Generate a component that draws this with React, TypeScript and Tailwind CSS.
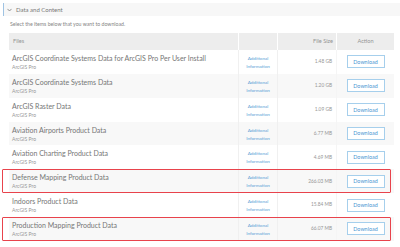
import React from "react";

const rows = [
  { name: "ArcGIS Coordinate Systems Data for ArcGIS Pro Per User Install", size: "1.48 GB", hl: false },
  { name: "ArcGIS Coordinate Systems Data", size: "1.20 GB", hl: false },
  { name: "ArcGIS Raster Data", size: "1.09 GB", hl: false },
  { name: "Aviation Airports Product Data", size: "6.77 MB", hl: false },
  { name: "Aviation Charting Product Data", size: "4.69 MB", hl: false },
  { name: "Defense Mapping Product Data", size: "266.03 MB", hl: true },
  { name: "Indoors Product Data", size: "15.84 MB", hl: false },
  { name: "Production Mapping Product Data", size: "66.07 MB", hl: true },
];

export default function App() {
  return (
    <div
      className="w-[400px] h-[247px] bg-white overflow-hidden relative"
      style={{ fontFamily: "Lato, 'Noto Sans', sans-serif" }}
    >
      <div className="pt-[3px] pl-[3px]">
        <div className="h-[13px] bg-[#f7f7f7] border-l-[1.5px] border-[#9fc3e3] flex items-center pl-[3px]">
          <svg width="5" height="4" viewBox="0 0 5 4" className="mr-[4px]">
            <path d="M0.5 0.9 L2.5 3 L4.5 0.9" fill="none" stroke="#7a7a7a" strokeWidth="0.8" />
          </svg>
          <span className="text-[6px] leading-none text-[#777777]">Data and Content</span>
        </div>
      </div>
      <div className="pl-[10px] pt-[6px] h-[17px] text-[5.2px] leading-none text-[#858585] whitespace-nowrap">
        Select the items below that you want to download.
      </div>
      <div className="ml-[9px] w-[385px]">
        <div className="grid grid-cols-[230px_39px_59px_57px] h-[17px] bg-[#ededed] text-[5.6px] text-[#949494]">
          <div className="flex items-center pl-[4px] border-r border-white">Files</div>
          <div className="border-r border-white"></div>
          <div className="flex items-center justify-end pr-[3px] border-r border-white">File Size</div>
          <div className="flex items-center justify-center">Action</div>
        </div>
        {rows.map((r, i) => (
          <div
            key={i}
            className={`relative grid grid-cols-[230px_39px_59px_57px] h-[23.86px] ${i % 2 === 1 ? "bg-[#f8f8f8]" : "bg-white"}`}
          >
            <div className="flex flex-col justify-center pl-[3px] border-r border-[#f0f0f0]">
              <div className="text-[7px] leading-[9px] text-[#767676] whitespace-nowrap">{r.name}</div>
              <div className="text-[5px] leading-[6px] text-[#969696] mt-[1px]">ArcGIS Pro</div>
            </div>
            <div className="flex flex-col items-center justify-center text-[4.6px] leading-[8px] text-[#5a9fd6] border-r border-[#f0f0f0]">
              <span>Additional</span>
              <span>Information</span>
            </div>
            <div className="flex items-center justify-end pr-[4px] text-[4.8px] text-[#969696] border-r border-[#f5f5f5]">
              {r.size}
            </div>
            <div className="flex items-center justify-center">
              <div className="w-[38px] h-[13px] border border-[#a6cfec] bg-white flex items-center justify-center text-[5.4px] text-[#4a95d2]">
                Download
              </div>
            </div>
            {r.hl && (
              <div className="absolute left-[-7px] right-[3px] top-0 bottom-0 border-[1.5px] border-[#e8434c] rounded-[1px] pointer-events-none"></div>
            )}
          </div>
        ))}
      </div>
    </div>
  );
}
